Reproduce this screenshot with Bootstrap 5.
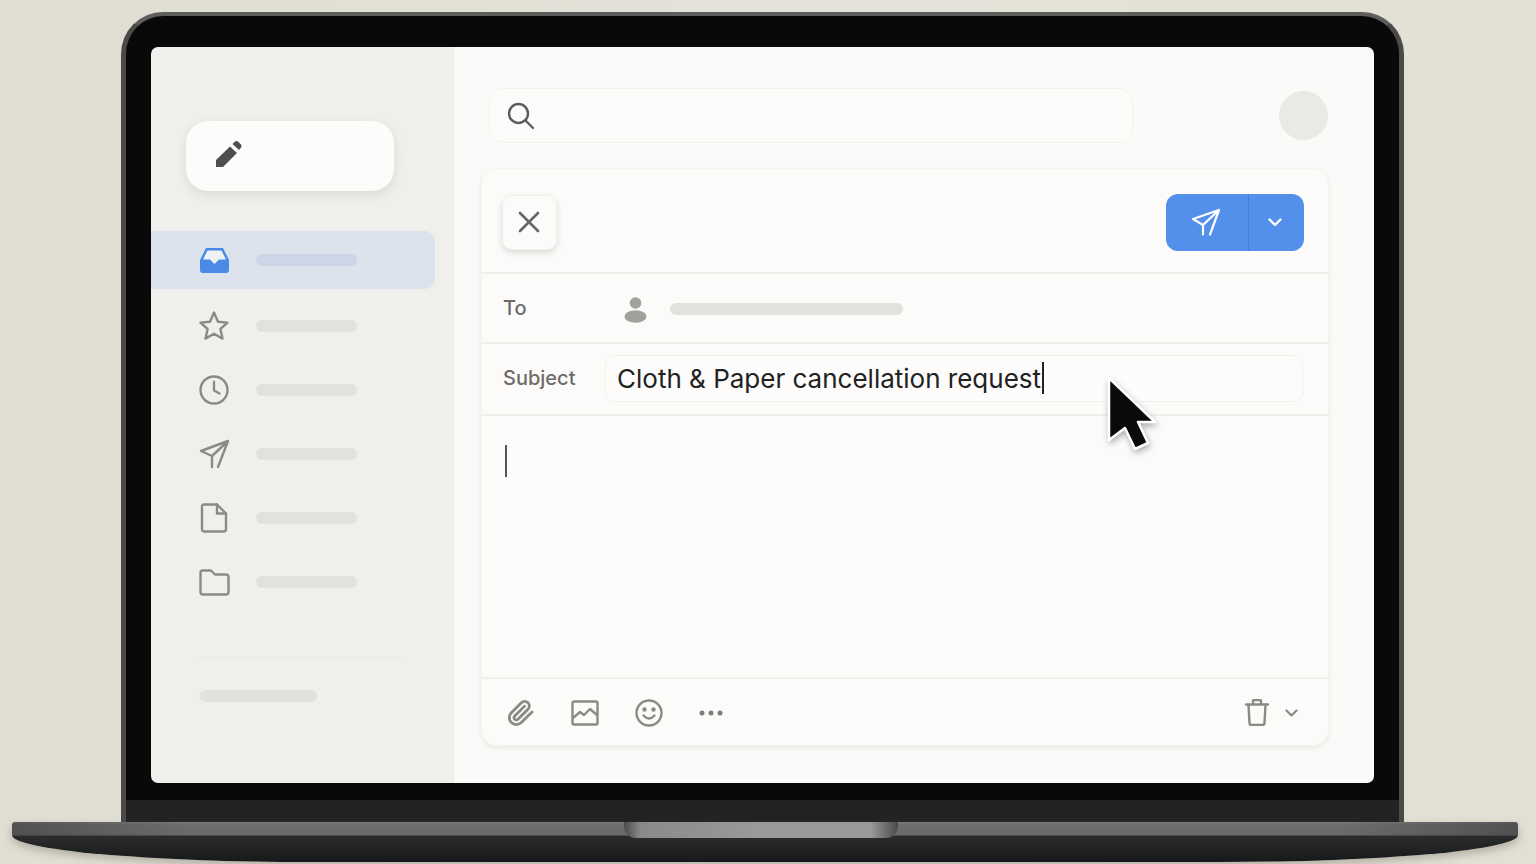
<!DOCTYPE html>
<html lang="en">
<head>
<meta charset="UTF-8">
<meta name="viewport" content="width=device-width, initial-scale=1.0">
<title>Compose</title>
<link rel="stylesheet" href="https://cdn.jsdelivr.net/npm/bootstrap@5.3.2/dist/css/bootstrap.min.css">
<style>
    html, body { height: 100%; }
    body {
        margin: 0;
        overflow: hidden;
        background: linear-gradient(100deg, #e0ddd3, #e5e2d9 50%, #e2dfd4);
        font-family: Inter, "Liberation Sans", sans-serif;
        padding-top: 12px;
    }
    svg { display: block; flex: none; }
    .ln { fill: none; stroke: #8a8a87; stroke-width: 2.4; stroke-linecap: round; stroke-linejoin: round; }

    /* laptop */
    .lid {
        width: 1283px;
        height: 810px;
        margin-left: 121px;
        padding: 31px 25px 0 25px;
        background: #090909;
        border-style: solid;
        border-width: 4px 5px 0 5px;
        border-color: #5d5d5b #4a4a49 #000 #4a4a49;
        border-radius: 42px 42px 0 0;
    }
    .screen { width: 1223px; height: 736px; border-radius: 7px; overflow: hidden; position: relative; }
    .chin { height: 39px; margin: 0 -25px; background: linear-gradient(#090909 17px, #232323 17px); }
    .base {
        width: 1506px;
        height: 40px;
        margin-left: 12px;
        position: relative;
        border-radius: 3px 3px 300px 300px / 3px 3px 27px 27px;
        background:
            linear-gradient(90deg, #35363780 0, #6f6f6e00 12%, #6f6f6e00 88%, #35363780 100%) 0 0 / 100% 14px no-repeat,
            linear-gradient(#7f7f7d 0, #6e6e6d 2px, #6a6a69 13px, #2b2c2e 14px, #17181a 100%);
        box-shadow: 0 4px 8px rgba(90, 85, 70, .35);
    }
    .hinge {
        position: absolute;
        left: 612px;
        top: 0;
        width: 274px;
        height: 16px;
        border-radius: 0 0 12px 12px;
        background: linear-gradient(90deg, #4a4a4a 0, #8a8a89 6%, #9a9a99 50%, #9a9a99 90%, #4a4a4a 100%);
    }

    /* sidebar */
    .side { width: 303px; background: #f0efeb; border-right: 1px solid #ecebe7; padding-top: 74px; }
    .compose-btn {
        width: 208px;
        height: 70px;
        margin-left: 35px;
        padding: 18px 0 0 29px;
        background: #fcfcfa;
        border-radius: 22px;
        box-shadow: 0 4px 12px rgba(0, 0, 0, .09);
    }
    .side-nav { margin-top: 40px; }
    .side-item { height: 64px; padding-left: 47px; gap: 26px; }
    .side-item.first { height: 58px; margin-bottom: 5px; width: 284px; background: #dde3ec; border-radius: 0 10px 10px 0; }
    .side-item.first .pill { background: #cbd7e6; }
    .icon-box { width: 32px; display: flex; justify-content: center; }
    .pill { height: 12px; border-radius: 6px; background: #e2e1dd; }
    .w-nav { width: 101px; }
    .side-rule { height: 1px; margin: 43px 48px 0 47px; background: #e8e7e3; }
    .w-foot { width: 118px; margin: 32px 0 0 48px; }

    /* main */
    .main-pane { background: #fbfaf8; padding: 41px 44px 0 27px; }
    .search-row { height: 55px; padding-left: 8px; gap: 146px; margin-bottom: 25px; }
    .search-box {
        width: 644px;
        height: 55px;
        padding-left: 16px;
        background: #fcfbf9;
        border: 1px solid #f2f1ee;
        border-radius: 14px;
    }
    .avatar { width: 49px; height: 49px; border-radius: 50%; background: #eae9e6; }
    .mail-card {
        width: 848px;
        height: 578px;
        background: #fcfbf9;
        border: 0;
        border-radius: 16px;
        box-shadow: 0 2px 5px rgba(0, 0, 0, .08), inset 0 0 0 1px #f5f4f1;
    }
    .mail-head { height: 106px; padding: 4px 25px 0 21px; border-bottom: 2px solid #f0efec; }
    .close-btn {
        width: 55px;
        height: 55px;
        padding: 0 2px 0 0;
        background: #fcfbf9;
        border: 1px solid #f1f0ed;
        border-radius: 10px;
        box-shadow: 0 3px 6px rgba(0, 0, 0, .13);
    }
    .send-main, .send-more { height: 57px; padding: 0 3px 0 0; background: #5290eb; border: 0; }
    .send-main { width: 83px; border-radius: 12px 0 0 12px; }
    .send-more { width: 56px; border-radius: 0 12px 12px 0; border-left: 1px solid #3f7fdd; }
    .mail-row { padding-left: 22px; border-bottom: 2px solid #f0efec; }
    .row-to { height: 70px; }
    .row-subject { height: 72px; padding-bottom: 2px; }
    .row-label { width: 102px; font-size: 20px; font-weight: 500; color: #6c6c6a; }
    .row-to .row-label { width: 121px; }
    .to-person { margin-top: 3px; }
    .w-to { width: 233px; margin: 2px 0 0 23px; }
    .subject-box {
        width: 698px;
        height: 47px;
        padding-left: 11px;
        font-size: 26px;
        color: #222;
        white-space: nowrap;
        background: #fdfcfa;
        border: 1px solid #f2f1ee;
        border-radius: 10px;
    }
    .caret-a { width: 2px; height: 32px; margin-left: 1px; background: #222; }
    .mail-body { height: 263px; padding: 29px 0 0 24px; border-bottom: 2px solid #f0efec; }
    .caret-b { width: 2px; height: 32px; background: #555; }
    .mail-foot { height: 67px; padding: 0 31px 0 26px; }
    .foot-tools { gap: 36px; }
    .cursor-mark { position: absolute; left: 955px; top: 328px; }
</style>
</head>
<body>
<div class="lid">
    <div class="screen d-flex">
        <div class="side flex-shrink-0">
            <div class="compose-btn">
                <svg width="28" height="29" viewBox="0 0 28 29" fill="#4f4f4f"><path d="M1 28V21L15 7.5 22 14 8 28Z"/><path d="M17.5 5 20 2.5Q21.5 1.5 23 2.5L26 5.5Q27 7 26 8.5L24 11Z"/></svg>
            </div>
            <div class="side-nav">
                <div class="side-item first d-flex align-items-center">
                    <div class="icon-box">
                        <svg width="31" height="27" viewBox="0 0 31 27"><path fill="#4a8ae6" d="M7 1H24L30 13V23Q30 26 27 26H4Q1 26 1 23V13Z"/><path fill="#eff1f4" d="M8.5 3.5H22.5L27 12.5H20L15.5 17 11 12.5H4Z"/></svg>
                    </div>
                    <div class="pill w-nav"></div>
                </div>
                <div class="side-item d-flex align-items-center">
                    <div class="icon-box">
                        <svg width="32" height="32" viewBox="0 0 32 32" class="ln"><path d="M16 2.5 20 11.7 29.5 12.6 22.4 19 24.5 28.6 16 23.7 7.5 28.6 9.6 19 2.5 12.6 12 11.7Z"/></svg>
                    </div>
                    <div class="pill w-nav"></div>
                </div>
                <div class="side-item d-flex align-items-center">
                    <div class="icon-box">
                        <svg width="32" height="32" viewBox="0 0 32 32" class="ln"><circle cx="16" cy="16" r="13.5"/><path d="M16 8V16.5L21.5 19.5"/></svg>
                    </div>
                    <div class="pill w-nav"></div>
                </div>
                <div class="side-item d-flex align-items-center">
                    <div class="icon-box">
                        <svg width="32" height="30" viewBox="0 0 32 30" class="ln"><path d="M30 2 3 12 14 17V28M14 17 30 2 20 28"/></svg>
                    </div>
                    <div class="pill w-nav"></div>
                </div>
                <div class="side-item d-flex align-items-center">
                    <div class="icon-box">
                        <svg width="28" height="30" viewBox="0 0 28 30" class="ln"><path d="M4 1.5H17L26 10.5V26Q26 28.5 23.5 28.5H4.5Q2 28.5 2 26V4Q2 1.5 4 1.5Z"/><path d="M17 1.5V10.5H26"/></svg>
                    </div>
                    <div class="pill w-nav"></div>
                </div>
                <div class="side-item d-flex align-items-center">
                    <div class="icon-box">
                        <svg width="31" height="27" viewBox="0 0 31 27" class="ln"><path d="M3.5 1.5H12L16 5.5H27Q29.5 5.5 29.5 8V23Q29.5 25.5 27 25.5H4Q1.5 25.5 1.5 23V3.5Q1.5 1.5 3.5 1.5Z"/></svg>
                    </div>
                    <div class="pill w-nav"></div>
                </div>
            </div>
            <div class="side-rule"></div>
            <div class="pill w-foot"></div>
        </div>

        <div class="main-pane flex-grow-1">
            <div class="search-row d-flex align-items-center">
                <div class="search-box d-flex align-items-center">
                    <svg width="29" height="29" viewBox="0 0 29 29" fill="none" stroke="#5c5c5a" stroke-width="2.4" stroke-linecap="round"><circle cx="12.5" cy="12.5" r="9.5"/><path d="M19.5 19.5 27 27"/></svg>
                </div>
                <div class="avatar"></div>
            </div>

            <div class="card mail-card">
                <div class="mail-head d-flex align-items-center justify-content-between">
                    <button class="btn close-btn d-flex align-items-center justify-content-center" type="button" aria-label="Close">
                        <svg width="22" height="22" viewBox="0 0 22 22" fill="none" stroke="#666" stroke-width="2.6" stroke-linecap="round"><path d="M2 2 20 20M20 2 2 20"/></svg>
                    </button>
                    <div class="btn-group">
                        <button class="btn send-main d-flex align-items-center justify-content-center" type="button" aria-label="Send">
                            <svg width="30" height="28" viewBox="0 0 30 28" fill="none" stroke="#fff" stroke-width="2.2" stroke-linecap="round" stroke-linejoin="round"><path d="M28 2 2 11 12 17V26.5M12 17 28 2 19 26.5"/></svg>
                        </button>
                        <button class="btn send-more d-flex align-items-center justify-content-center" type="button" aria-label="More">
                            <svg width="14" height="9" viewBox="0 0 14 9" fill="none" stroke="#fff" stroke-width="2.4" stroke-linecap="round" stroke-linejoin="round"><path d="M1.5 1.5 7 7 12.5 1.5"/></svg>
                        </button>
                    </div>
                </div>
                <div class="mail-row row-to d-flex align-items-center">
                    <div class="row-label">To</div>
                    <svg class="to-person" width="23" height="27" viewBox="0 0 23 27" fill="#a0a09d"><circle cx="11.5" cy="7" r="5.8"/><ellipse cx="11.5" cy="20.5" rx="11" ry="6.2"/></svg>
                    <div class="pill w-to"></div>
                </div>
                <div class="mail-row row-subject d-flex align-items-center">
                    <div class="row-label">Subject</div>
                    <div class="subject-box d-flex align-items-center"><span>Cloth &amp; Paper cancellation request</span><span class="caret-a"></span></div>
                </div>
                <div class="mail-body"><div class="caret-b"></div></div>
                <div class="mail-foot d-flex align-items-center justify-content-between">
                    <div class="foot-tools d-flex align-items-center">
                        <svg width="28" height="28" viewBox="0 0 24 24" class="ln"><path d="m21.44 11.05-9.19 9.19a6 6 0 0 1-8.49-8.49l8.57-8.57A4 4 0 1 1 18 8.84l-8.59 8.57a2 2 0 0 1-2.83-2.83l8.49-8.48"/></svg>
                        <svg width="28" height="26" viewBox="0 0 28 26" class="ln"><rect x="1.5" y="1.5" width="25" height="23" rx="1.5"/><path d="M2 18 9 12 13 15 19 9 26 15"/></svg>
                        <svg width="28" height="28" viewBox="0 0 28 28" class="ln"><circle cx="14" cy="14" r="12.5"/><path d="M8.5 16.5Q14 22.5 19.5 16.5"/><circle cx="9.5" cy="10.5" r="1" fill="#8a8a87"/><circle cx="18.5" cy="10.5" r="1" fill="#8a8a87"/></svg>
                        <svg width="24" height="6" viewBox="0 0 24 6" fill="#7d7d7b"><circle cx="3" cy="3" r="2.5"/><circle cx="12" cy="3" r="2.5"/><circle cx="21" cy="3" r="2.5"/></svg>
                    </div>
                    <div class="d-flex align-items-center gap-3">
                        <svg width="24" height="27" viewBox="0 0 24 27" class="ln"><path d="M1 5.5H23M8 5V2Q8 1 9 1H15Q16 1 16 2V5M3.5 6 4.5 24Q4.5 26 6.5 26H17.5Q19.5 26 19.5 24L20.5 6"/></svg>
                        <svg width="13" height="8" viewBox="0 0 13 8" fill="none" stroke="#8a8a87" stroke-width="2.2" stroke-linecap="round" stroke-linejoin="round"><path d="M1.5 1.5 6.5 6.5 11.5 1.5"/></svg>
                    </div>
                </div>
            </div>
        </div>

        <svg class="cursor-mark" width="56" height="80" viewBox="0 0 56 80" style="filter: drop-shadow(1px 3px 3px rgba(0,0,0,.3))"><path d="M3 3 49 47H32L42 68 29 74 19 53 3 65Z" fill="#0a0a0a" stroke="#fff" stroke-width="2.5" stroke-linejoin="round"/></svg>
    </div>
    <div class="chin"></div>
</div>
<div class="base"><div class="hinge"></div></div>

<script src="https://cdn.jsdelivr.net/npm/bootstrap@5.3.2/dist/js/bootstrap.bundle.min.js"></script>
</body>
</html>
